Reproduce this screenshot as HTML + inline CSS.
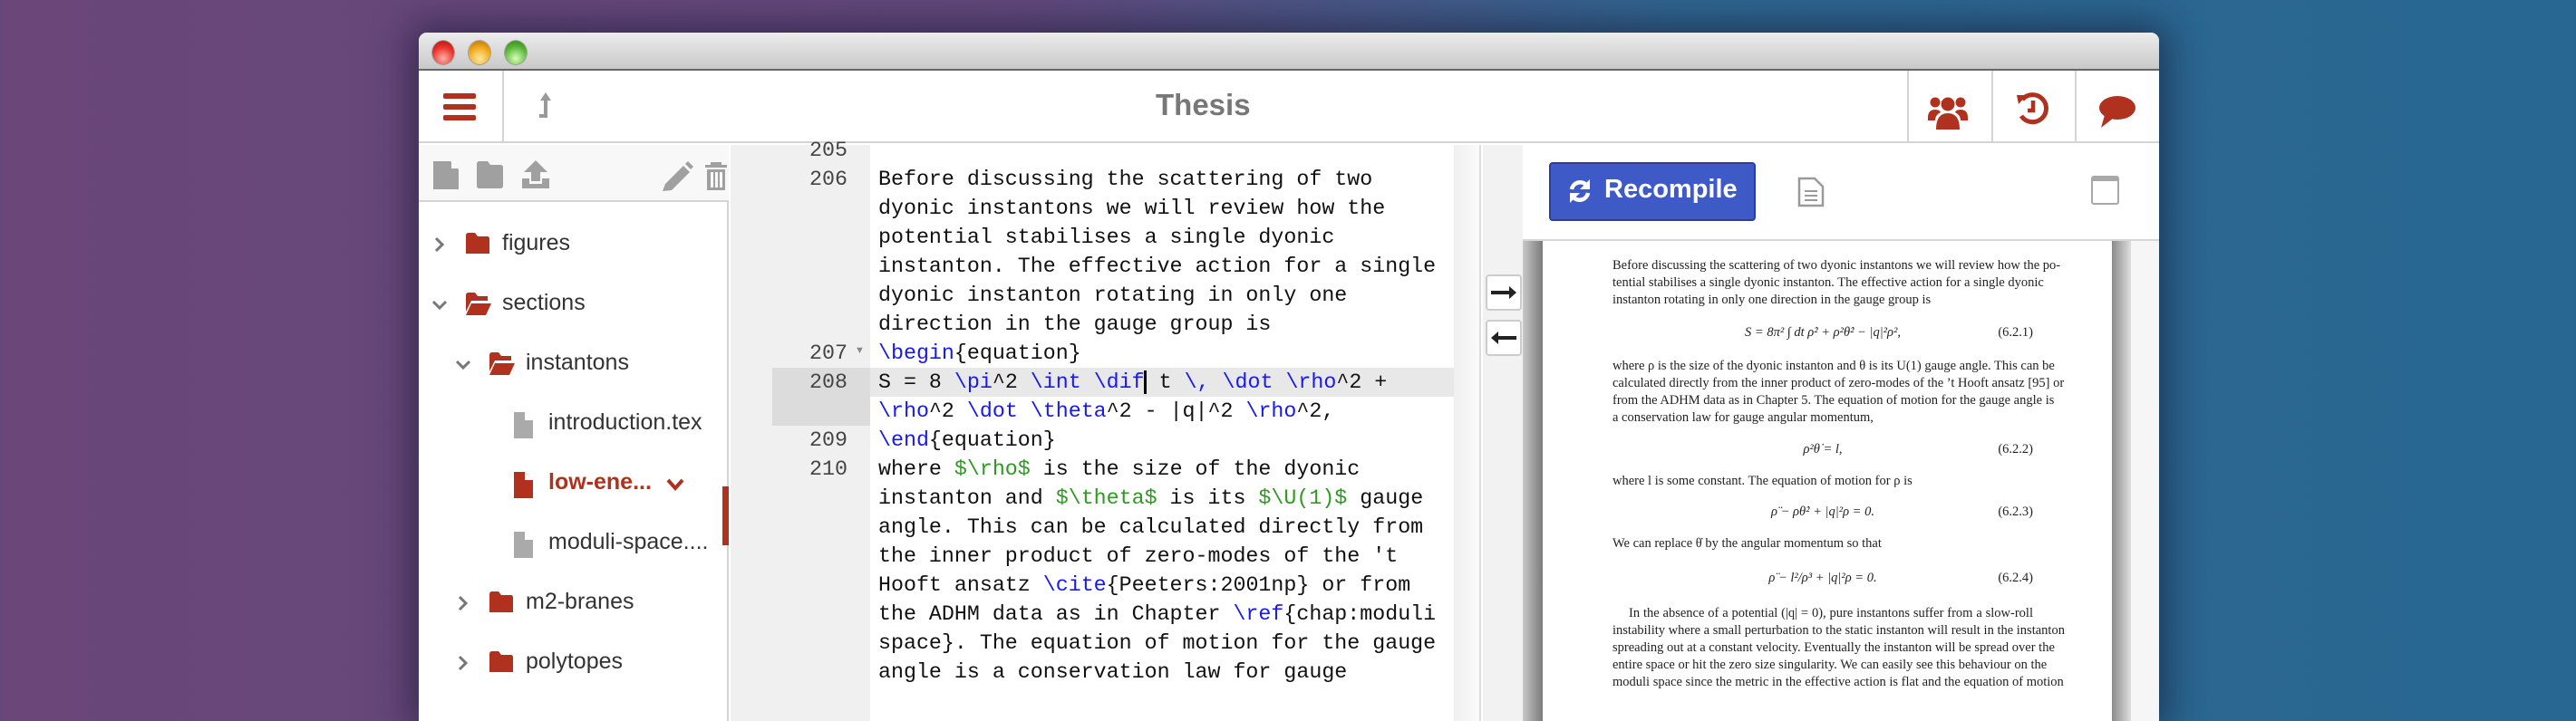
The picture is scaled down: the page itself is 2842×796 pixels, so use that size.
<!DOCTYPE html>
<html><head><meta charset="utf-8">
<style>
*{margin:0;padding:0;box-sizing:border-box}
body{width:2842px;height:754px;overflow:hidden;position:relative;background:linear-gradient(90deg,#6a4679 0%,#62497c 40%,#2f6690 65%,#276791 100%);font-family:"Liberation Sans",sans-serif}
.abs{position:absolute}
#win{left:462px;top:36px;width:1920px;height:760px;background:#fff;border-radius:9px 9px 0 0;overflow:hidden;box-shadow:0 0 40px 10px rgba(20,20,50,.55)}
#title{left:0;top:0;width:1920px;height:42px;background:linear-gradient(#ececec,#c9c9c9);border-bottom:2px solid #666}
.tl{top:9px;width:24px;height:26px;border-radius:50%;box-shadow:0 0 0 1px rgba(0,0,0,.25)}
#tb{left:0;top:42px;width:1920px;height:80px;background:#fff;border-bottom:2px solid #d4d4d4}
.vd{top:0;width:2px;height:80px;background:#d4d4d4}
.code{font-family:"Liberation Mono",monospace;font-size:23.3px;line-height:32px;white-space:pre;color:#111}
.b{color:#1a1ae8}.g{color:#2f9a22}
.ln{font-family:"Liberation Mono",monospace;font-size:23.3px;line-height:32px;color:#444;text-align:right;width:130px;white-space:pre}
.tree{font-size:25px;color:#333}
.pdf{font-family:"Liberation Serif",serif;font-size:14.5px;color:#222;white-space:nowrap}
.pl{position:absolute;left:77px;width:464px;text-align:justify;text-align-last:justify}
.eq{position:absolute;left:77px;width:464px}
.eq .m{position:absolute;left:0;width:464px;text-align:center;font-style:italic}
.eq .n{position:absolute;right:0}
</style></head><body>
<div id="win" class="abs">
 <div id="title" class="abs">
  <div class="abs tl" style="left:15px;background:radial-gradient(circle at 50% 75%,#ffb0a8,#e8322a 55%,#a01810)"></div>
  <div class="abs tl" style="left:55px;background:radial-gradient(circle at 50% 75%,#ffe9a0,#f0a818 55%,#b06a08)"></div>
  <div class="abs tl" style="left:95px;background:radial-gradient(circle at 50% 75%,#d8ffb8,#5cb83a 55%,#2e7a18)"></div>
 </div>
 <div id="tb" class="abs">
  <svg class="abs" style="left:27px;top:25px" width="36" height="30"><rect x="0" y="0" width="36" height="6" rx="2" fill="#b0311d"/><rect x="0" y="12" width="36" height="6" rx="2" fill="#b0311d"/><rect x="0" y="24" width="36" height="6" rx="2" fill="#b0311d"/></svg>
  <div class="abs vd" style="left:92px"></div>
  <svg class="abs" style="left:130px;top:22px" width="20" height="32"><path d="M10 2 L4 11 H8 V26 H3 V30 H12 V11 H16 Z" fill="#999"/></svg>
  <div class="abs" style="left:813px;top:19px;font-size:33px;font-weight:bold;color:#777">Thesis</div>
  <div class="abs vd" style="left:1642px"></div>
  <div class="abs vd" style="left:1735px"></div>
  <div class="abs vd" style="left:1827px"></div>
  <svg class="abs" style="left:1665px;top:25px" width="44" height="44" viewBox="0 0 44 44" fill="#b0311d"><circle cx="8" cy="10" r="5.5"/><circle cx="36" cy="10" r="5.5"/><circle cx="22" cy="12" r="7.5"/><path d="M0 27 Q0 18 8 18 Q13 18 14 21 Q8 24 8 30 H0Z"/><path d="M44 27 Q44 18 36 18 Q31 18 30 21 Q36 24 36 30 H44Z"/><path d="M9 40 Q9 22 22 22 Q35 22 35 40 Z"/></svg>
  <svg class="abs" style="left:1762px;top:23px" width="38" height="38" viewBox="0 0 38 38"><path d="M7 9 A15 15 0 1 1 6 27" fill="none" stroke="#b0311d" stroke-width="5"/><path d="M1 4 L12 4 L3 14Z" fill="#b0311d"/><path d="M19 10 V21 H13" fill="none" stroke="#b0311d" stroke-width="4.5"/></svg>
  <svg class="abs" style="left:1852px;top:27px" width="42" height="36" viewBox="0 0 42 36"><ellipse cx="22" cy="14" rx="20" ry="13" fill="#b0311d"/><path d="M8 22 L4 36 L18 25Z" fill="#b0311d"/></svg>
 </div>
 <!-- sidebar -->
 <div class="abs" style="left:0;top:124px;width:342px;height:640px;background:#fff;border-right:2px solid #d4d4d4"></div>
 <div class="abs" style="left:0;top:124px;width:342px;height:63px;background:#f8f8f8;border-bottom:2px solid #d4d4d4"></div>
 <svg class="abs" style="left:16px;top:141px" width="330" height="34" fill="#a0a0a0">
  <path d="M0 1 H19 L28 10 V32 H0Z"/><path d="M20 1 V9 H28" fill="#f8f8f8"/>
  <path d="M48 4 Q48 1 51 1 H60 L63 5 H74 Q77 5 77 8 V28 Q77 31 74 31 H51 Q48 31 48 28Z"/>
  <path d="M113 0 L100 13 H108 V23 H118 V13 H126Z"/><path d="M98 20 H106 V26 H120 V20 H128 V31 H98Z"/>
  <path d="M256 26 L276 6 L283 13 L263 33 L253 34Z"/><path d="M278 4 L281 1 L287 7 L284 10Z"/>
  <path d="M300 5 H324 V8 H300Z M306 2 H318 V5 H306Z"/><path d="M302 10 H322 V33 H302Z M306 13 V30 H309 V13Z M311 13 V30 H314 V13Z M316 13 V30 H319 V13Z" fill-rule="evenodd"/>
 </svg>
 <!-- tree -->
 <svg class="abs" style="left:0;top:210px" width="342" height="530">
  <g fill="none" stroke="#777" stroke-width="3">
   <polyline points="19,17 26,24 19,31"/>
   <polyline points="16,87 23,94 30,87"/>
   <polyline points="42,153 49,160 56,153"/>
   <polyline points="45,413 52,420 45,427"/>
   <polyline points="45,479 52,486 45,493"/>
  </g>
  <g fill="#b0311d">
   <path d="M52 14 Q52 11 55 11 H62 L65 15 H76 Q78 15 78 18 V34 H52Z"/>
   <path d="M52 80 Q52 77 55 77 H62 L65 81 H76 V86 H58 L52 98Z M58 89 H80 L74 102 H52Z"/>
   <path d="M78 146 Q78 143 81 143 H88 L91 147 H102 V152 H84 L78 164Z M84 155 H106 L100 168 H78Z"/>
   <path d="M78 410 Q78 407 81 407 H88 L91 411 H102 Q104 411 104 414 V430 H78Z"/>
   <path d="M78 476 Q78 473 81 473 H88 L91 477 H102 Q104 477 104 480 V496 H78Z"/>
   <path d="M105 275 H117 L126 284 V304 H105Z"/>
  </g>
  <path d="M275 284 L283 293 L291 284" fill="none" stroke="#b0311d" stroke-width="4"/>
  <g fill="#aaa"><path d="M105 209 H117 L126 218 V238 H105Z"/><path d="M105 341 H117 L126 350 V370 H105Z"/></g>
  <g fill="#fff"><path d="M117 209 V218 H126"/><path d="M117 341 V350 H126"/><path d="M117 275 V284 H126"/></g>
  <rect x="335" y="291" width="7" height="65" fill="#b0311d"/>
 </svg>
 <div class="abs tree" style="left:92px;top:218px">figures</div>
 <div class="abs tree" style="left:92px;top:284px">sections</div>
 <div class="abs tree" style="left:118px;top:350px">instantons</div>
 <div class="abs tree" style="left:143px;top:416px">introduction.tex</div>
 <div class="abs tree" style="left:143px;top:482px;color:#b0311d;font-weight:bold">low-ene...</div>
 <div class="abs tree" style="left:143px;top:548px">moduli-space....</div>
 <div class="abs tree" style="left:118px;top:614px">m2-branes</div>
 <div class="abs tree" style="left:118px;top:680px">polytopes</div>
 <!-- editor -->
 <div class="abs" style="left:344px;top:124px;width:154px;height:640px;background:#f0f0f0"></div>
 <div class="abs" style="left:498px;top:124px;width:644px;height:640px;background:#fff"></div>
 <div class="abs" style="left:390px;top:370px;width:108px;height:64px;background:#dcdcdc"></div>
 <div class="abs" style="left:498px;top:370px;width:644px;height:32px;background:#e8e8e8"></div>
 <div class="abs" style="left:1142px;top:124px;width:30px;height:640px;background:linear-gradient(90deg,#f0f0f0,#fafafa);border-right:2px solid #ddd"></div>
 <div class="abs" style="left:1174px;top:124px;width:44px;height:640px;background:#f2f2f2"></div>
 <div class="abs" style="left:1177px;top:267px;width:40px;height:40px;background:#fff;border:2px solid #ccc;border-radius:4px"></div>
 <div class="abs" style="left:1177px;top:317px;width:40px;height:40px;background:#fff;border:2px solid #ccc;border-radius:4px"></div>
 <svg class="abs" style="left:1183px;top:280px" width="28" height="14"><path d="M0 5 H20 V0 L28 7 L20 14 V9 H0Z" fill="#222"/></svg>
 <svg class="abs" style="left:1183px;top:330px" width="28" height="14"><path d="M28 5 H8 V0 L0 7 L8 14 V9 H28Z" fill="#222"/></svg>
 <div class="abs ln" style="left:343px;top:114px">205
206





207
208

209
210</div>
 <div class="abs" style="left:481px;top:345px;font-size:11px;color:#888">▼</div>
 <div class="abs code" style="left:507px;top:146px">Before discussing the scattering of two
dyonic instantons we will review how the
potential stabilises a single dyonic
instanton. The effective action for a single
dyonic instanton rotating in only one
direction in the gauge group is
<span class="b">\begin</span>{equation}
S = 8 <span class="b">\pi</span>^2 <span class="b">\int</span> <span class="b">\dif</span><span style="border-left:3px solid #000;margin-left:-1px"></span> t <span class="b">\,</span> <span class="b">\dot</span> <span class="b">\rho</span>^2 +
<span class="b">\rho</span>^2 <span class="b">\dot</span> <span class="b">\theta</span>^2 - |q|^2 <span class="b">\rho</span>^2,
<span class="b">\end</span>{equation}
where <span class="g">$\rho$</span> is the size of the dyonic
instanton and <span class="g">$\theta$</span> is its <span class="g">$\U(1)$</span> gauge
angle. This can be calculated directly from
the inner product of zero-modes of the 't
Hooft ansatz <span class="b">\cite</span>{Peeters:2001np} or from
the ADHM data as in Chapter <span class="b">\ref</span>{chap:moduli
space}. The equation of motion for the gauge
angle is a conservation law for gauge</div>
 <!-- pdf -->
 <div class="abs" style="left:1218px;top:230px;width:702px;height:540px;background:linear-gradient(90deg,#c8c8c8 0,#7a7a7a 22px,#fff 22px,#fff 650px,#8a8a8a 650px,#dedede 671px,#f6f6f6 671px)"></div>
 <div class="abs" style="left:1218px;top:124px;width:702px;height:106px;background:#fff;border-bottom:2px solid #d6d6d6"></div>
 <div class="abs" style="left:1247px;top:143px;width:228px;height:65px;background:#3e5ac7;border:2px solid #2a3f9c;border-radius:4px"></div>
 <svg class="abs" style="left:1268px;top:161px" width="26" height="28" viewBox="0 0 26 28"><path d="M4 12 A9.5 9.5 0 0 1 20 7" fill="none" stroke="#fff" stroke-width="4.5"/><path d="M24 1 V12 H13Z" fill="#fff"/><path d="M22 16 A9.5 9.5 0 0 1 6 21" fill="none" stroke="#fff" stroke-width="4.5"/><path d="M2 27 V16 H13Z" fill="#fff"/></svg>
 <div class="abs" style="left:1308px;top:157px;font-size:29px;font-weight:bold;color:#fff">Recompile</div>
 <svg class="abs" style="left:1521px;top:159px" width="30" height="34"><path d="M2 2 H19 L28 11 V32 H2Z" fill="none" stroke="#999" stroke-width="2.5"/><path d="M8 16 H22 M8 21 H22 M8 26 H22" stroke="#999" stroke-width="2"/></svg>
 <div class="abs" style="left:1845px;top:158px;width:31px;height:32px;border:2px solid #a8a8a8;border-top:6px solid #a8a8a8;border-radius:3px"></div>
 <div class="abs pdf" style="left:1240px;top:0;width:630px;height:760px">
  <div class="pl" style="top:249px">Before discussing the scattering of two dyonic instantons we will review how the po-</div>
  <div class="pl" style="top:268px">tential stabilises a single dyonic instanton. The effective action for a single dyonic</div>
  <div class="pl" style="top:287px;text-align-last:left">instanton rotating in only one direction in the gauge group is</div>
  <div class="eq" style="top:323px"><span class="m">S = 8π² ∫ dt ρ̇² + ρ²θ̇² − |q|²ρ²,</span><span class="n">(6.2.1)</span></div>
  <div class="pl" style="top:360px">where ρ is the size of the dyonic instanton and θ is its U(1) gauge angle. This can be</div>
  <div class="pl" style="top:379px">calculated directly from the inner product of zero-modes of the ’t Hooft ansatz [95] or</div>
  <div class="pl" style="top:398px">from the ADHM data as in Chapter 5. The equation of motion for the gauge angle is</div>
  <div class="pl" style="top:417px;text-align-last:left">a conservation law for gauge angular momentum,</div>
  <div class="eq" style="top:452px"><span class="m">ρ²θ̇ = l,</span><span class="n">(6.2.2)</span></div>
  <div class="pl" style="top:487px;text-align-last:left">where l is some constant. The equation of motion for ρ is</div>
  <div class="eq" style="top:521px"><span class="m">ρ̈ − ρθ̇² + |q|²ρ = 0.</span><span class="n">(6.2.3)</span></div>
  <div class="pl" style="top:556px;text-align-last:left">We can replace θ̇ by the angular momentum so that</div>
  <div class="eq" style="top:594px"><span class="m">ρ̈ − l²/ρ³ + |q|²ρ = 0.</span><span class="n">(6.2.4)</span></div>
  <div class="pl" style="top:633px;text-indent:18px">In the absence of a potential (|q| = 0), pure instantons suffer from a slow-roll</div>
  <div class="pl" style="top:652px">instability where a small perturbation to the static instanton will result in the instanton</div>
  <div class="pl" style="top:671px">spreading out at a constant velocity. Eventually the instanton will be spread over the</div>
  <div class="pl" style="top:690px">entire space or hit the zero size singularity. We can easily see this behaviour on the</div>
  <div class="pl" style="top:709px">moduli space since the metric in the effective action is flat and the equation of motion</div>
 </div>
</div>
</body></html>
